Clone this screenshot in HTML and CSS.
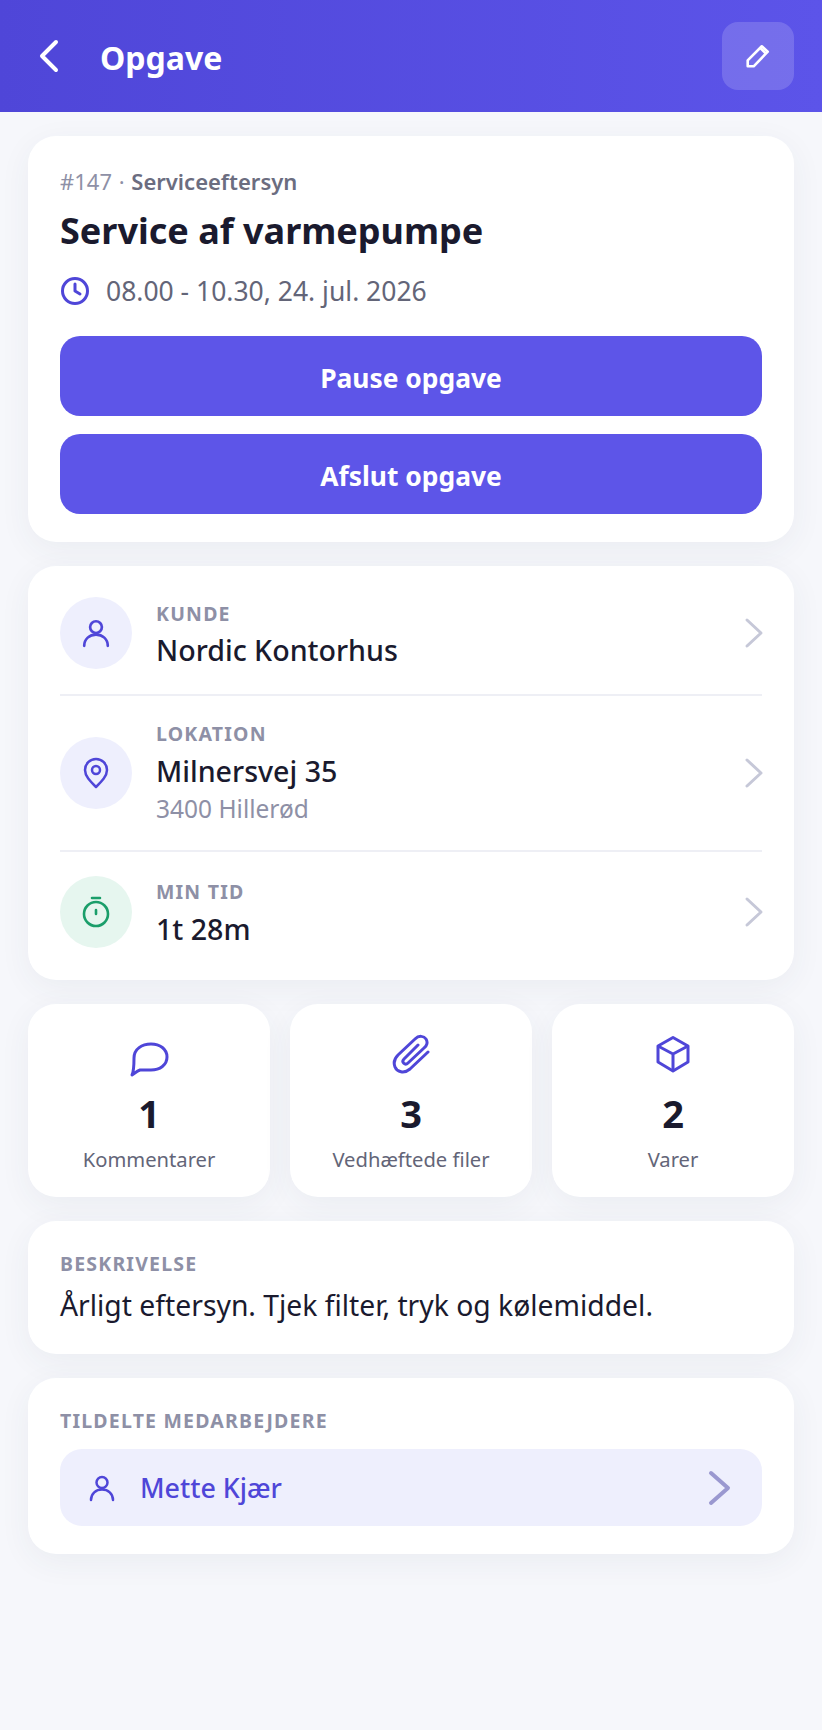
FILE: index.html
```html
<!DOCTYPE html>
<html lang="da">
<head>
  <meta charset="UTF-8" />
  <meta name="viewport" content="width=device-width, initial-scale=1" />
  <title>Opgave</title>
  <link rel="stylesheet" href="styles.css">
</head>
<body>
  <header class="topbar">
    <svg class="back-icon" viewBox="0 0 24 36" fill="none" stroke="currentColor" stroke-width="4" stroke-linecap="round" stroke-linejoin="round"><path d="M20 4 6 18l14 14"/></svg>
    <h1 class="topbar-title">Opgave</h1>
    <button class="edit-btn">
      <svg viewBox="0 0 24 24" fill="none" stroke="currentColor" stroke-width="2.4" stroke-linejoin="round"><path d="M2.500 21.500V16L15.500 3 21 8 8 21.500z"/><path d="m14 4.500 5.500 5.500"/></svg>
    </button>
  </header>

  <main class="content">
    <section class="card task-card">
      <div class="task-ref">#147 · <strong>Serviceeftersyn</strong></div>
      <h2 class="task-title">Service af varmepumpe</h2>
      <div class="task-time">
        <svg viewBox="0 0 28 28" fill="none" stroke="#4f46d8" stroke-width="3" stroke-linecap="round" stroke-linejoin="round"><circle cx="14" cy="14" r="12.500"/><path d="M14 7v7l5 3"/></svg>
        <span>08.00 - 10.30, 24. jul. 2026</span>
      </div>
      <button class="action-btn">Pause opgave</button>
      <button class="action-btn">Afslut opgave</button>
    </section>

    <section class="card info-card">
      <div class="info-row row-customer">
        <div class="round-icon">
          <svg viewBox="0 0 28 28" fill="none" stroke="#4f46d8" stroke-width="2.500" stroke-linecap="round"><circle cx="14" cy="8.500" r="5.500"/><path d="M3 26c0-6.500 5-10.500 11-10.500S25 19.500 25 26"/></svg>
        </div>
        <div class="info-text">
          <div class="label">KUNDE</div>
          <div class="info-value">Nordic Kontorhus</div>
        </div>
        <svg class="chevron" viewBox="0 0 20 32" fill="none" stroke="currentColor" stroke-width="3" stroke-linecap="round" stroke-linejoin="round"><path d="m3 3 14 13L3 29"/></svg>
      </div>
      <div class="info-row row-location">
        <div class="round-icon">
          <svg viewBox="0 0 28 32" fill="none" stroke="#4f46d8" stroke-width="2.500" stroke-linejoin="round"><path d="M14 30C8 24 3 19 3 13a11 11 0 0 1 22 0c0 6-5 11-11 17z"/><circle cx="14" cy="13" r="4"/></svg>
        </div>
        <div class="info-text">
          <div class="label">LOKATION</div>
          <div class="info-value">Milnersvej 35</div>
          <div class="info-sub">3400 Hillerød</div>
        </div>
        <svg class="chevron" viewBox="0 0 20 32" fill="none" stroke="currentColor" stroke-width="3" stroke-linecap="round" stroke-linejoin="round"><path d="m3 3 14 13L3 29"/></svg>
      </div>
      <div class="info-row row-time">
        <div class="round-icon green">
          <svg viewBox="0 0 28 32" fill="none" stroke="#1a9e6a" stroke-width="2.600" stroke-linecap="round"><circle cx="14" cy="18" r="12"/><path d="M14 14v4M10 2h8"/></svg>
        </div>
        <div class="info-text">
          <div class="label">MIN TID</div>
          <div class="info-value">1t 28m</div>
        </div>
        <svg class="chevron" viewBox="0 0 20 32" fill="none" stroke="currentColor" stroke-width="3" stroke-linecap="round" stroke-linejoin="round"><path d="m3 3 14 13L3 29"/></svg>
      </div>
    </section>

    <section class="tiles">
      <div class="card tile">
        <svg viewBox="0 0 40 44" fill="none" stroke="#4f46d8" stroke-width="3" stroke-linejoin="round"><path d="M3 41C5 37 5 32 5 24 5 15 13 10 22 10c9 0 16 5 16 13S31 36 22 36H11C8 37 6 39 3 41z"/></svg>
        <div class="tile-count">1</div>
        <div class="tile-name">Kommentarer</div>
      </div>
      <div class="card tile">
        <svg viewBox="0 0 40 44" fill="none" stroke="#4f46d8" stroke-width="3" stroke-linecap="round" stroke-linejoin="round"><path d="M37 18 19 35C13 40 6 38 4 33 2 28 4 24 7 21L24 5C28 1 33 2 35 5 37 8 36 12 33 14L17 29C14 32 10 28 13 25L27 11"/></svg>
        <div class="tile-count">3</div>
        <div class="tile-name">Vedhæftede filer</div>
      </div>
      <div class="card tile">
        <svg viewBox="0 0 40 44" fill="none" stroke="#4f46d8" stroke-width="3" stroke-linejoin="round"><path d="M20 3.500 35 12v16l-15 9-15-9V12z"/><path d="M5 12l15 8 15-8M20 20v17"/></svg>
        <div class="tile-count">2</div>
        <div class="tile-name">Varer</div>
      </div>
    </section>

    <section class="card desc-card">
      <div class="label">BESKRIVELSE</div>
      <p class="desc-text">Årligt eftersyn. Tjek filter, tryk og kølemiddel.</p>
    </section>

    <section class="card staff-card">
      <div class="label">TILDELTE MEDARBEJDERE</div>
      <div class="staff-pill">
        <svg viewBox="0 0 28 28" fill="none" stroke="#4f46d8" stroke-width="2.500" stroke-linecap="round"><circle cx="14" cy="8.500" r="5.500"/><path d="M3 26c0-6.500 5-10.500 11-10.500S25 19.500 25 26"/></svg>
        <span class="staff-name">Mette Kjær</span>
        <svg class="staff-chevron" viewBox="0 0 24 36" fill="none" stroke="currentColor" stroke-width="4" stroke-linecap="round" stroke-linejoin="round"><path d="m3 3 17 15L3 33"/></svg>
      </div>
    </section>
  </main>
</body>
</html>
```

FILE: styles.css
```css
* {
  box-sizing: border-box;
}
body {
  font-family: 'Noto Sans', sans-serif;
  margin: 0;
  min-height: 1730px;
  background: #f6f7fb;
  color: #1a1a2e;
}
.topbar {
  height: 112px;
  display: flex;
  align-items: center;
  padding: 0 28px 0 36px;
  background: linear-gradient(90deg, #4f46d8, #5c54e9);
  color: white;
}
.back-icon {
  width: 24px;
  height: 36px;
}
.topbar-title {
  margin: 2px 0 0 40px;
  font-size: 32px;
  font-weight: 700;
  flex: 1;
}
.edit-btn {
  width: 72px;
  height: 68px;
  border: none;
  border-radius: 16px;
  background: rgba(255,255,255,0.16);
  color: white;
  display: flex;
  align-items: center;
  justify-content: center;
  padding: 0;
}
.edit-btn svg {
  width: 26px;
  height: 26px;
}
.content {
  padding: 24px 28px;
  display: flex;
  flex-direction: column;
  gap: 24px;
}
.card {
  background: white;
  border-radius: 28px;
  box-shadow: 0 8px 32px rgba(50,60,90,0.06);
}
.task-card {
  height: 406px;
  padding: 29px 32px 0;
  display: flex;
  flex-direction: column;
}
.task-ref {
  font-size: 22px;
  line-height: 32px;
  word-spacing: 1px;
  color: #8e90a6;
}
.task-ref strong {
  color: #6b6d80;
  font-weight: 600;
}
.task-title {
  margin: 8px 0 0;
  font-size: 36px;
  line-height: 52px;
  font-weight: 700;
}
.task-time {
  margin-top: 15px;
  margin-bottom: 26px;
  display: flex;
  align-items: center;
  gap: 17px;
  font-size: 26.5px;
  line-height: 38px;
  color: #636578;
}
.task-time svg {
  width: 28px;
  height: 28px;
  margin-left: 1px;
}
.action-btn {
  height: 80px;
  border: none;
  border-radius: 20px;
  background: #5d55e8;
  color: white;
  font-family: inherit;
  font-size: 26.4px;
  font-weight: 700;
  padding: 4px 0 0;
  margin-bottom: 18px;
  flex: none;
}
.info-card {
  height: 414px;
  padding: 0 32px;
}
.info-row {
  display: flex;
  align-items: center;
  gap: 24px;
  border-bottom: 2px solid #eeeff5;
}
.row-customer {
  height: 130px;
  padding-top: 6px;
}
.row-customer .info-text {
  margin-top: 4px;
}
.row-customer .info-value {
  margin-top: 3px;
}
.row-location {
  height: 156px;
}
.row-time {
  height: 128px;
  padding-bottom: 8px;
  border-bottom: none;
}
.row-time .info-text {
  margin-top: 4px;
}
.round-icon {
  width: 72px;
  height: 72px;
  flex: none;
  border-radius: 50%;
  background: #eeeffd;
  display: flex;
  align-items: center;
  justify-content: center;
}
.round-icon.green {
  background: #e6f6ef;
}
.round-icon svg {
  width: 30px;
  height: 32px;
}
.info-text {
  flex: 1;
}
.label {
  font-size: 19.5px;
  line-height: 26px;
  font-weight: 700;
  letter-spacing: 1.2px;
  color: #8e90a6;
}
.info-value {
  font-size: 28.6px;
  line-height: 40px;
  font-weight: 500;
  margin-top: 4px;
}
.info-sub {
  font-size: 24.5px;
  line-height: 34px;
  margin-top: 1px;
  color: #8e90a6;
}
.chevron {
  width: 20px;
  height: 32px;
  margin-right: -2px;
  color: #c6c8d8;
  flex: none;
}
.tiles {
  display: grid;
  grid-template-columns: repeat(3, 1fr);
  gap: 20px;
}
.tile {
  height: 193px;
  padding-top: 30px;
  display: flex;
  flex-direction: column;
  align-items: center;
}
.tile svg {
  width: 40px;
  height: 44px;
}
.tile-count {
  font-size: 38px;
  line-height: 50px;
  font-weight: 700;
  margin-top: 10px;
}
.tile-name {
  font-size: 20.2px;
  line-height: 30px;
  color: #636578;
  margin-top: 6px;
}
.desc-card {
  height: 133px;
  padding: 30px 32px 0;
}
.desc-text {
  margin: 8px 0 0;
  font-size: 28.3px;
  line-height: 40px;
}
.staff-card {
  height: 176px;
  padding: 30px 32px 0;
}
.staff-pill {
  margin-top: 15px;
  height: 77px;
  border-radius: 22px;
  background: #eeeffd;
  display: flex;
  align-items: center;
  padding: 0 30px 0 28px;
  gap: 24px;
}
.staff-pill svg {
  width: 28px;
  height: 28px;
  flex: none;
}
.staff-name {
  flex: 1;
  font-size: 26.8px;
  font-weight: 500;
  color: #4f46d8;
}
.staff-pill .staff-chevron {
  width: 24px;
  height: 36px;
  color: #9a98d0;
}
```
